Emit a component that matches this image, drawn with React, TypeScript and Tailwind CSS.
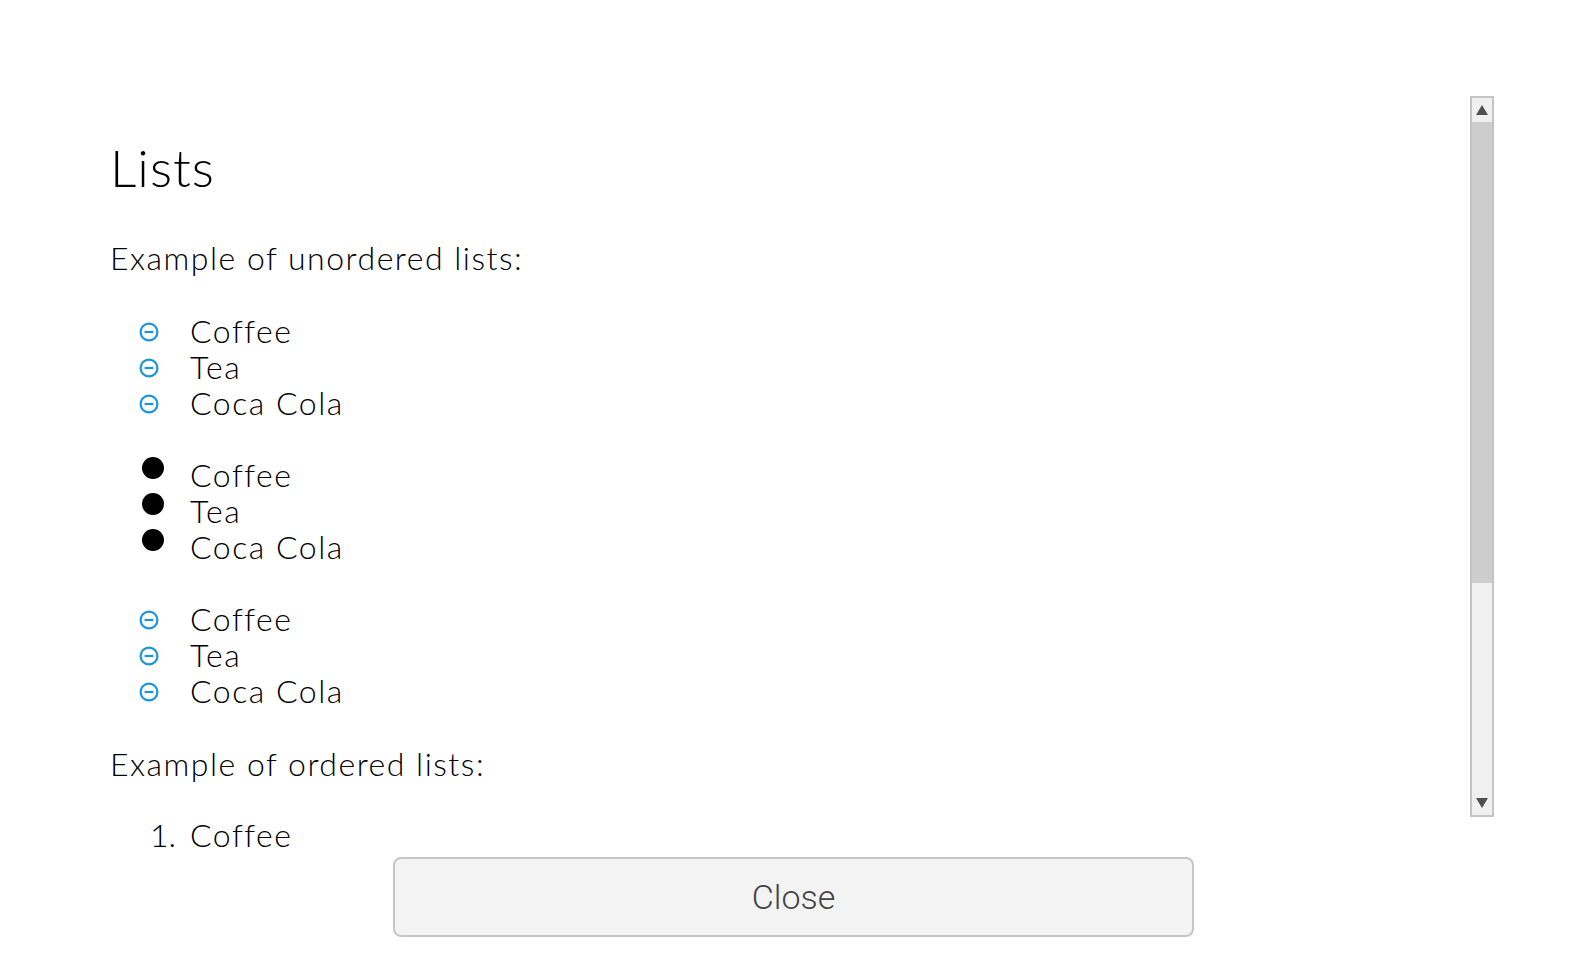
import React from 'react';

const items = ['Coffee', 'Tea', 'Coca Cola'];

const MinusCircle = () => (
  <svg width="22" height="22" viewBox="0 0 22 22" className="ml-[28px] mt-[1px]">
    <circle cx="11" cy="11" r="8.4" fill="none" stroke="#1a94e2" strokeWidth="2.2" />
    <line x1="6.6" y1="11" x2="15.4" y2="11" stroke="#1a94e2" strokeWidth="2.2" />
  </svg>
);

const IconList: React.FC<{ className?: string }> = ({ className = '' }) => (
  <ul className={className}>
    {items.map((item) => (
      <li key={item} className="flex items-center h-[36px]">
        <span className="w-[80px] flex items-center">
          <MinusCircle />
        </span>
        <span>{item}</span>
      </li>
    ))}
  </ul>
);

const DiscList: React.FC<{ className?: string }> = ({ className = '' }) => (
  <ul className={className}>
    {items.map((item) => (
      <li key={item} className="flex h-[36px]">
        <span className="w-[80px] flex items-start">
          <span className="ml-[32px] w-[22px] h-[22px] rounded-full bg-black" />
        </span>
        <span>{item}</span>
      </li>
    ))}
  </ul>
);

export default function App() {
  return (
    <div className="relative w-[1592px] h-[956px] bg-white overflow-hidden text-black font-['Lato',sans-serif] font-light">
      <div className="h-[857px] overflow-hidden pl-[110px] pt-[137px] text-[32px] leading-[36px] tracking-[1.5px]">
        <h1 className="text-[52px] leading-[60px] font-light tracking-[1px]">Lists</h1>
        <p className="mt-[43px]">Example of unordered lists:</p>
        <IconList className="mt-[37px]" />
        <DiscList className="mt-[36px]" />
        <IconList className="mt-[36px]" />
        <p className="mt-[37px]">Example of ordered lists:</p>
        <ol className="mt-[35px]">
          <li className="flex h-[36px]">
            <span className="w-[80px] text-right pr-[14px] tracking-normal">1.</span>
            <span>Coffee</span>
          </li>
        </ol>
      </div>

      <button className="block ml-[393px] w-[801px] h-[80px] border-2 border-[#c6c6c6] rounded-[8px] bg-[#f3f3f3] text-[34px] font-light text-[#444] font-['Roboto',sans-serif]">
        Close
      </button>

      <div className="absolute left-[1470px] top-[96px] w-[24px] h-[721px] border-2 border-[#c4c4c4] bg-[#f0f0f0] flex flex-col">
        <div className="h-[24px] flex items-center justify-center">
          <span className="w-0 h-0 border-x-[6px] border-x-transparent border-b-[10px] border-b-[#505050]" />
        </div>
        <div className="h-[461px] bg-[#cdcdcd]" />
        <div className="flex-1" />
        <div className="h-[24px] flex items-center justify-center">
          <span className="w-0 h-0 border-x-[6px] border-x-transparent border-t-[10px] border-t-[#505050]" />
        </div>
      </div>
    </div>
  );
}
